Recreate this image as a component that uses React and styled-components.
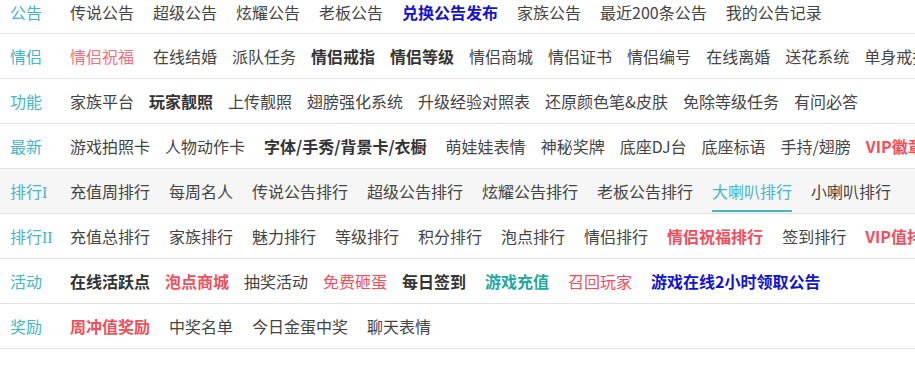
import styled, { createGlobalStyle } from "styled-components";

const GlobalStyle = createGlobalStyle`
  body {
    margin: 0;
    overflow: hidden;
    background: #ffffff;
    font-family: "Noto Sans CJK SC", "Microsoft YaHei", sans-serif;
  }
`;

const COLORS = {
  text: "#444444",
  dark: "#333333",
  blue: "#1212d2",
  red: "#f24e5c",
  pink: "#f2707c",
  teal: "#22a7a2",
  label: "#45b5c9",
};

const Menu = styled.div`
  width: 100%;
`;

const Row = styled.div`
  display: flex;
  align-items: center;
  height: ${({ $cut }) => ($cut ? "23px" : "44px")};
  padding: ${({ $cut }) => ($cut ? "0 0 10px 10px" : "0 0 0 10px")};
  border-bottom: 1px solid #e2e2e2;
  background: ${({ $shade }) => ($shade ? "#f6f6f6" : "#ffffff")};
  white-space: nowrap;
`;

const Label = styled.div`
  flex: none;
  width: 60px;
  font-family: "Liberation Serif", "Noto Sans CJK SC", serif;
  font-size: 16px;
  color: ${COLORS.label};
`;

const Items = styled.div`
  display: flex;
  align-items: center;
  height: 100%;
`;

const Item = styled.a`
  position: relative;
  display: flex;
  align-items: center;
  height: 100%;
  margin-right: ${({ $gap }) => $gap}px;
  font-size: 16px;
  font-weight: ${({ $bold }) => ($bold ? 700 : 400)};
  color: ${({ $color }) => COLORS[$color] || COLORS.text};
  text-decoration: none;
  cursor: pointer;

  &::after {
    content: "";
    display: ${({ $active }) => ($active ? "block" : "none")};
    position: absolute;
    left: 0;
    right: 0;
    bottom: 1px;
    height: 2px;
    background: ${COLORS.label};
  }
`;

const rows = [
  {
    label: "公告",
    gap: 19,
    cut: true,
    items: [
      { t: "传说公告" },
      { t: "超级公告" },
      { t: "炫耀公告" },
      { t: "老板公告" },
      { t: "兑换公告发布", c: "blue", b: true },
      { t: "家族公告" },
      { t: "最近200条公告" },
      { t: "我的公告记录" },
    ],
  },
  {
    label: "情侣",
    gap: 15,
    items: [
      { t: "情侣祝福", c: "pink", w: 4 },
      { t: "在线结婚" },
      { t: "派队任务" },
      { t: "情侣戒指", c: "dark", b: true },
      { t: "情侣等级", c: "dark", b: true },
      { t: "情侣商城" },
      { t: "情侣证书" },
      { t: "情侣编号" },
      { t: "在线离婚" },
      { t: "送花系统" },
      { t: "单身戒指" },
    ],
  },
  {
    label: "功能",
    gap: 15,
    items: [
      { t: "家族平台" },
      { t: "玩家靓照", c: "dark", b: true },
      { t: "上传靓照" },
      { t: "翅膀强化系统" },
      { t: "升级经验对照表" },
      { t: "还原颜色笔&皮肤" },
      { t: "免除等级任务" },
      { t: "有问必答" },
    ],
  },
  {
    label: "最新",
    gap: 15,
    items: [
      { t: "游戏拍照卡" },
      { t: "人物动作卡", w: 4 },
      { t: "字体/手秀/背景卡/衣橱", c: "dark", b: true, w: 4 },
      { t: "萌娃娃表情" },
      { t: "神秘奖牌" },
      { t: "底座DJ台" },
      { t: "底座标语" },
      { t: "手持/翅膀" },
      { t: "VIP徽章", c: "red", b: true },
    ],
  },
  {
    label: "排行I",
    gap: 19,
    shade: true,
    items: [
      { t: "充值周排行" },
      { t: "每周名人" },
      { t: "传说公告排行" },
      { t: "超级公告排行" },
      { t: "炫耀公告排行" },
      { t: "老板公告排行" },
      { t: "大喇叭排行", c: "label", active: true },
      { t: "小喇叭排行" },
    ],
  },
  {
    label: "排行II",
    gap: 19,
    items: [
      { t: "充值总排行" },
      { t: "家族排行" },
      { t: "魅力排行" },
      { t: "等级排行" },
      { t: "积分排行" },
      { t: "泡点排行" },
      { t: "情侣排行" },
      { t: "情侣祝福排行", c: "red", b: true },
      { t: "签到排行" },
      { t: "VIP值排行", c: "red", b: true },
    ],
  },
  {
    label: "活动",
    gap: 15,
    items: [
      { t: "在线活跃点", c: "dark", b: true },
      { t: "泡点商城", c: "red", b: true },
      { t: "抽奖活动" },
      { t: "免费砸蛋", c: "red" },
      { t: "每日签到", c: "dark", b: true, w: 4 },
      { t: "游戏充值", c: "teal", b: true, w: 4 },
      { t: "召回玩家", c: "red", w: 4 },
      { t: "游戏在线2小时领取公告", c: "blue", b: true },
    ],
  },
  {
    label: "奖励",
    gap: 19,
    items: [
      { t: "周冲值奖励", c: "red", b: true },
      { t: "中奖名单" },
      { t: "今日金蛋中奖" },
      { t: "聊天表情" },
    ],
  },
];

export default function App() {
  return (
    <>
      <GlobalStyle />
      <Menu>
        {rows.map((row) => (
          <Row key={row.label} $shade={row.shade} $cut={row.cut}>
            <Label>{row.label}</Label>
            <Items>
              {row.items.map((item) => (
                <Item
                  key={item.t}
                  $gap={row.gap + (item.w || 0)}
                  $bold={item.b}
                  $color={item.c}
                  $active={item.active}
                >
                  {item.t}
                </Item>
              ))}
            </Items>
          </Row>
        ))}
      </Menu>
    </>
  );
}
